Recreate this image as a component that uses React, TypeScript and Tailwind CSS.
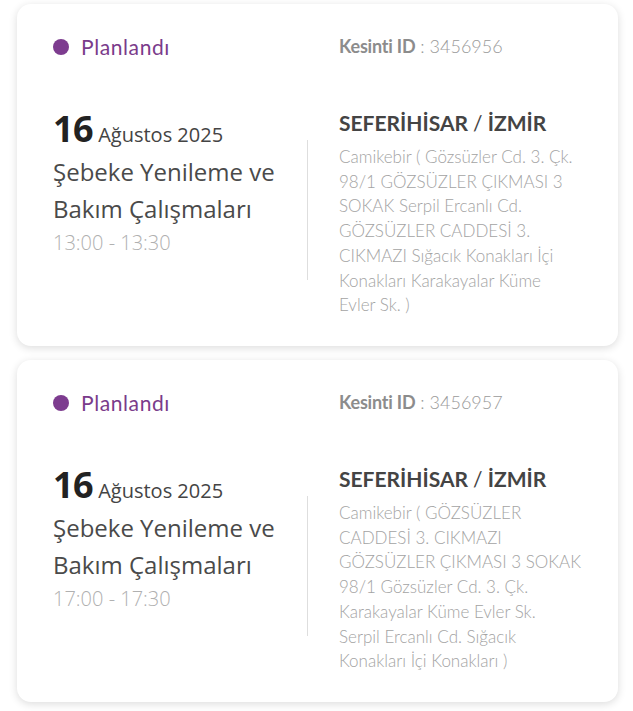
import React from "react";

type Item = {
  id: string;
  time: string;
  lines: string[];
};

const items: Item[] = [
  {
    id: "3456956",
    time: "13:00 - 13:30",
    lines: [
      "Camikebir ( Gözsüzler Cd. 3. Çk.",
      "98/1 GÖZSÜZLER ÇIKMASI 3",
      "SOKAK Serpil Ercanlı Cd.",
      "GÖZSÜZLER CADDESİ 3.",
      "CIKMAZI Sığacık Konakları İçi",
      "Konakları Karakayalar Küme",
      "Evler Sk. )",
    ],
  },
  {
    id: "3456957",
    time: "17:00 - 17:30",
    lines: [
      "Camikebir ( GÖZSÜZLER",
      "CADDESİ 3. CIKMAZI",
      "GÖZSÜZLER ÇIKMASI 3 SOKAK",
      "98/1 Gözsüzler Cd. 3. Çk.",
      "Karakayalar Küme Evler Sk.",
      "Serpil Ercanlı Cd. Sığacık",
      "Konakları İçi Konakları )",
    ],
  },
];

function Card({ item }: { item: Item }) {
  return (
    <div className="h-[342px] rounded-[14px] bg-white shadow-[0_2px_9px_rgba(0,0,0,0.14)] px-9 pt-[30px]">
      <div className="flex">
        <div className="w-[286px] flex items-center gap-3 h-[26px]">
          <span className="w-[16px] h-[16px] rounded-full bg-[#7d3c8f]" />
          <span className="text-[21px] tracking-[0.6px] text-[#7a3b8b] font-['Lato',sans-serif] leading-[26px]">
            Planlandı
          </span>
        </div>
        <div className="flex items-center h-[24px] text-[18px] font-['Lato',sans-serif] whitespace-nowrap">
          <span className="font-bold text-[#8c8c8c] tracking-[-0.2px]">Kesinti ID</span>
          <span className="text-[#9a9a9a] font-light">&nbsp;: {item.id}</span>
        </div>
      </div>
      <div className="flex mt-[49px]">
        <div className="w-[254px] font-['Open_Sans',sans-serif]">
          <div className="flex items-baseline whitespace-nowrap leading-[40px]">
            <span className="text-[36px] font-bold text-[#222] tracking-[-0.5px]">16</span>
            <span className="text-[20px] text-[#444] ml-[5px]">Ağustos 2025</span>
          </div>
          <div className="text-[24px] leading-[37px] text-[#4a4a4a] whitespace-nowrap mt-[-2px]">
            <div>Şebeke Yenileme ve</div>
            <div>Bakım Çalışmaları</div>
          </div>
          <div className="text-[20px] leading-[32px] text-[#b0b0b0] font-light whitespace-nowrap">
            {item.time}
          </div>
        </div>
        <div className="w-px h-[140px] bg-[#dedede] self-start mt-[31px]" />
        <div className="ml-[31px] font-['Lato',sans-serif]">
          <div className="text-[21px] leading-[28px] font-bold text-[#444] whitespace-nowrap">
            SEFERİHİSAR <span className="font-normal">/</span> İZMİR
          </div>
          <div className="mt-[8px] text-[17px] leading-[24.7px] text-[#a3a3a3] font-light">
            {item.lines.map((l, i) => (
              <div key={i} className="whitespace-nowrap">
                {l}
              </div>
            ))}
          </div>
        </div>
      </div>
    </div>
  );
}

export default function App() {
  return (
    <div className="w-[633px] min-h-[711px] bg-white pt-1 pl-[17px] pr-[15px] flex flex-col gap-[14px]">
      {items.map((it) => (
        <Card key={it.id} item={it} />
      ))}
    </div>
  );
}
